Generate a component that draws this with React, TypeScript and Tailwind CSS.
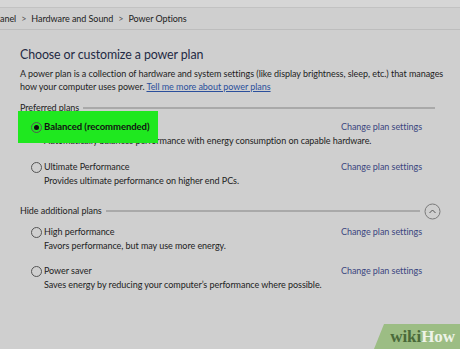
import React from "react";

const plansTop = [
  {
    name: "Balanced (recommended)",
    desc: "Automatically balances performance with energy consumption on capable hardware.",
    selected: true,
  },
  {
    name: "Ultimate Performance",
    desc: "Provides ultimate performance on higher end PCs.",
    selected: false,
  },
];

const plansMore = [
  {
    name: "High performance",
    desc: "Favors performance, but may use more energy.",
    selected: false,
  },
  {
    name: "Power saver",
    desc: "Saves energy by reducing your computer\u2019s performance where possible.",
    selected: false,
  },
];

function Radio({ checked }: { checked: boolean }) {
  return (
    <span className="w-[11px] h-[11px] rounded-full border border-[#555] flex items-center justify-center shrink-0">
      {checked && <span className="w-[5px] h-[5px] rounded-full bg-[#111]" />}
    </span>
  );
}

function Plan({ name, desc, selected }: { name: string; desc: string; selected: boolean }) {
  return (
    <div className="flex flex-col">
      <div className="flex items-center justify-between h-[14px]">
        <div className="relative flex items-center pl-[11px]">
          {selected && (
            <div className="absolute left-[-2px] top-[-9px] w-[140px] h-[32px] bg-[#1fe81f] z-10" />
          )}
          <div className="relative z-20 flex items-center gap-[2px]">
            <Radio checked={selected} />
            <span className={selected ? "font-bold text-[#111] text-[9.5px]" : "text-[#1e1e1e]"}>{name}</span>
          </div>
        </div>
        <span className="text-[#3b4680] pr-[18px]">Change plan settings</span>
      </div>
      <div className="h-[14px] flex items-center pl-[24px] text-[#222] whitespace-nowrap">{desc}</div>
    </div>
  );
}

function SectionHeading({ label, toggle }: { label: string; toggle?: boolean }) {
  return (
    <div className={`flex items-center gap-[4px] h-[14px] ${toggle ? "pr-0" : "pr-[5px]"}`}>
      <span className="text-[#222] whitespace-nowrap">{label}</span>
      <div className="flex-1 h-[1.5px] bg-[#a9a9a9]" />
      {toggle && (
        <svg width="17" height="17" viewBox="0 0 17 17" className="shrink-0 -mr-[1px]">
          <circle cx="8.5" cy="8.5" r="7.5" fill="none" stroke="#7a7a7a" strokeWidth="1" />
          <path d="M5.5 10 L8.5 7 L11.5 10" fill="none" stroke="#555" strokeWidth="1" />
        </svg>
      )}
    </div>
  );
}

export default function App() {
  return (
    <div
      className="relative w-[460px] h-[349px] bg-[#cfcfcf] overflow-hidden text-[9px] leading-[14px] tracking-[-0.05px]"
      style={{ fontFamily: 'Lato, "Noto Sans", sans-serif' }}
    >
      {/* Top strip */}
      <div className="h-[8px] bg-[#d6d6d6] border-b border-[#c2c2c2]" />

      {/* Breadcrumb */}
      <div className="h-[22px] flex items-center gap-[5px] text-[9px] text-[#222] border-b border-[#bdbdbd]">
        <span>anel</span>
        <span className="text-[#555]">&gt;</span>
        <span>Hardware and Sound</span>
        <span className="text-[#555]">&gt;</span>
        <span>Power Options</span>
      </div>

      <div className="px-[20px]">
        <h1 className="mt-[15px] text-[12.4px] leading-[20px] tracking-[-0.1px] text-[#1f2a44]">
          Choose or customize a power plan
        </h1>
        <p className="mt-[2px] leading-[13px] text-[#1e1e1e] whitespace-nowrap">
          A power plan is a collection of hardware and system settings (like display brightness, sleep, etc.) that manages
          <br />
          how your computer uses power.{" "}
          <span className="text-[#2b4f9c] underline">Tell me more about power plans</span>
        </p>

        <div className="mt-[8px]">
          <SectionHeading label="Preferred plans" />
        </div>

        <div className="mt-[5px] flex flex-col gap-[12px]">
          {plansTop.map((p) => (
            <Plan key={p.name} {...p} />
          ))}
        </div>

        <div className="mt-[16px]">
          <SectionHeading label="Hide additional plans" toggle />
        </div>

        <div className="mt-[7px] flex flex-col gap-[11px]">
          {plansMore.map((p) => (
            <Plan key={p.name} {...p} />
          ))}
        </div>
      </div>

      {/* wikiHow badge */}
      <div className="absolute right-0 bottom-0 w-[86px] h-[25px] bg-[#9cbd84] [clip-path:polygon(10px_0,100%_0,100%_100%,0_100%)] flex items-center justify-end pr-[5px]">
        <span
          className="text-[17px] font-bold leading-none"
          style={{ fontFamily: '"Liberation Serif", serif' }}
        >
          <span className="text-[#4a6a3a]">wiki</span>
          <span className="text-[#eef3e8]">How</span>
        </span>
      </div>
    </div>
  );
}
